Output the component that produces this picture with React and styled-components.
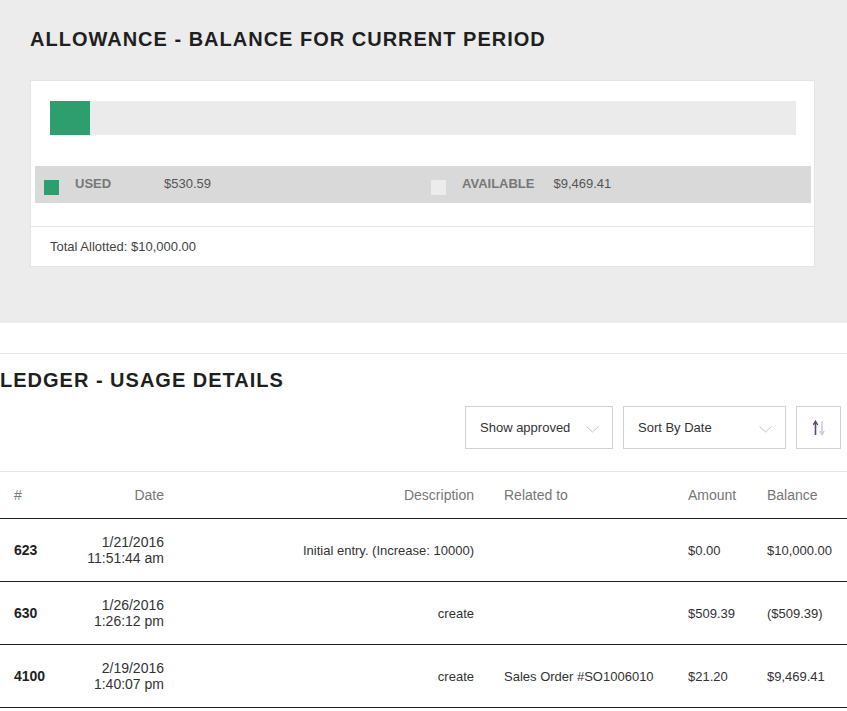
import React from "react";
import styled, { createGlobalStyle } from "styled-components";

const GlobalStyle = createGlobalStyle`
  html, body { margin: 0; padding: 0; background: #ffffff; }
  body { font-family: "Liberation Sans", Arial, sans-serif; color: #333; }
  * { box-sizing: border-box; }
`;

const AllowanceSection = styled.section`
  background: #ececec;
  padding: 27px 32px 56px 30px;
`;

const SectionTitle = styled.h2`
  margin: 0;
  font-size: 20px;
  line-height: 24px;
  font-weight: 700;
  letter-spacing: 1px;
  color: #1f1f1f;
  text-transform: uppercase;
`;

const Card = styled.div`
  margin-top: 29px;
  background: #fff;
  border: 1px solid #e3e3e3;
`;

const CardBody = styled.div`
  padding: 20px 3px 23px 4px;
`;

const Progress = styled.div`
  margin: 0 15px;
  height: 34px;
  background: #ebebeb;
  display: flex;
`;

const ProgressFill = styled.div`
  height: 100%;
  background: #2e9e6e;
`;

const Legend = styled.div`
  margin-top: 31px;
  height: 37px;
  background: #d9d9d9;
  display: grid;
  grid-template-columns: 1fr 1fr;
`;

const LegendItem = styled.div`
  display: flex;
  align-items: center;
  padding-left: ${(p) => p.$pad}px;
`;

const Swatch = styled.span`
  width: 15px;
  height: 15px;
  margin-top: 6px;
  margin-right: 16px;
  background: ${(p) => p.$color};
  flex: none;
`;

const LegendLabel = styled.span`
  min-width: 70px;
  margin-right: 19px;
  margin-top: -2px;
  font-size: 13px;
  font-weight: 700;
  color: #777;
`;

const LegendValue = styled.span`
  margin-top: -2px;
  font-size: 13px;
  color: #555;
`;

const CardFooter = styled.div`
  border-top: 1px solid #e6e6e6;
  height: 40px;
  display: flex;
  align-items: center;
  padding-left: 19px;
  font-size: 13px;
  color: #444;
`;

const LedgerSection = styled.section`
  margin-top: 30px;
  border-top: 1px solid #e6e6e6;
  padding-top: 14px;
`;

const Toolbar = styled.div`
  margin-top: 14px;
  display: flex;
  justify-content: flex-end;
  gap: 10px;
  padding-right: 6px;
`;

const Select = styled.div`
  width: ${(p) => p.$w}px;
  height: 43px;
  border: 1px solid #d2d2d2;
  background: #fff;
  display: flex;
  align-items: center;
  justify-content: space-between;
  padding: 0 13px 0 14px;
  font-size: 13px;
  color: #333;
`;

const Chevron = styled.svg`
  margin-top: 4px;
  flex: none;
`;

const SortButton = styled.button`
  width: 45px;
  height: 43px;
  border: 1px solid #d2d2d2;
  background: #fff;
  padding: 0;
  display: flex;
  align-items: center;
  justify-content: center;
  cursor: pointer;
`;

const Table = styled.div`
  margin-top: 22px;
  width: 100%;
`;

const Cols = "60px 118px 310px 186px 79px 1fr";

const HeadRow = styled.div`
  display: grid;
  grid-template-columns: ${Cols};
  height: 48px;
  border-top: 1px solid #e6e6e6;
  border-bottom: 1px solid #222;
  align-items: center;
`;

const BodyRow = styled.div`
  display: grid;
  grid-template-columns: ${Cols};
  height: 63px;
  border-bottom: 1px solid #222;
  align-items: center;
`;

const HeadCell = styled.div`
  padding: 0 14px 0 ${(p) => p.$pl || 14}px;
  text-align: ${(p) => p.$align || "left"};
  font-size: 14px;
  color: #777;
  white-space: nowrap;
`;

const Cell = styled.div`
  padding: 0 14px 0 ${(p) => p.$pl || 14}px;
  text-align: ${(p) => p.$align || "left"};
  font-size: 13px;
  color: #333;
  white-space: nowrap;
`;

const IdCell = styled(Cell)`
  font-size: 14px;
  font-weight: 700;
  color: #222;
`;

const DateCell = styled(Cell)`
  font-size: 14px;
  line-height: 16px;
  color: #333;
`;

const rows = [
  { id: "623", date: "1/21/2016", time: "11:51:44 am", desc: "Initial entry. (Increase: 10000)", rel: "", amt: "$0.00", bal: "$10,000.00" },
  { id: "630", date: "1/26/2016", time: "1:26:12 pm", desc: "create", rel: "", amt: "$509.39", bal: "($509.39)" },
  { id: "4100", date: "2/19/2016", time: "1:40:07 pm", desc: "create", rel: "Sales Order #SO1006010", amt: "$21.20", bal: "$9,469.41" },
];

const ChevronIcon = () => (
  <Chevron width="13" height="7" viewBox="0 0 13 7">
    <polyline points="0.5,0.5 6.5,6 12.5,0.5" fill="none" stroke="#c4c4c4" strokeWidth="1" />
  </Chevron>
);

const SortIcon = () => (
  <svg width="12" height="16" viewBox="0 0 12 16">
    <line x1="2.5" y1="2" x2="2.5" y2="15" stroke="#5d4470" strokeWidth="1.6" />
    <polyline points="0.3,5 2.5,1.2 4.7,5" fill="none" stroke="#5d4470" strokeWidth="1.4" />
    <line x1="9" y1="1" x2="9" y2="14" stroke="#c6cde0" strokeWidth="1.6" />
    <polyline points="6.8,11 9,14.8 11.2,11" fill="none" stroke="#c6cde0" strokeWidth="1.4" />
  </svg>
);

export default function App() {
  const used = 530.59;
  const total = 10000;
  return (
    <>
      <GlobalStyle />
      <AllowanceSection>
        <SectionTitle>Allowance - Balance for current period</SectionTitle>
        <Card>
          <CardBody>
            <Progress>
              <ProgressFill style={{ width: `${(used / total) * 100}%` }} />
            </Progress>
            <Legend>
              <LegendItem $pad={9}>
                <Swatch $color="#2e9e6e" />
                <LegendLabel>USED</LegendLabel>
                <LegendValue>$530.59</LegendValue>
              </LegendItem>
              <LegendItem $pad={8}>
                <Swatch $color="#ececec" />
                <LegendLabel>AVAILABLE</LegendLabel>
                <LegendValue>$9,469.41</LegendValue>
              </LegendItem>
            </Legend>
          </CardBody>
          <CardFooter>Total Allotted: $10,000.00</CardFooter>
        </Card>
      </AllowanceSection>

      <LedgerSection>
        <SectionTitle>Ledger - Usage details</SectionTitle>
        <Toolbar>
          <Select $w={148}>
            <span>Show approved</span>
            <ChevronIcon />
          </Select>
          <Select $w={163}>
            <span>Sort By Date</span>
            <ChevronIcon />
          </Select>
          <SortButton aria-label="Toggle sort order">
            <SortIcon />
          </SortButton>
        </Toolbar>
        <Table>
          <HeadRow>
            <HeadCell>#</HeadCell>
            <HeadCell $align="right">Date</HeadCell>
            <HeadCell $align="right">Description</HeadCell>
            <HeadCell $pl={16}>Related to</HeadCell>
            <HeadCell>Amount</HeadCell>
            <HeadCell>Balance</HeadCell>
          </HeadRow>
          {rows.map((r) => (
            <BodyRow key={r.id}>
              <IdCell>{r.id}</IdCell>
              <DateCell $align="right">
                {r.date}
                <br />
                {r.time}
              </DateCell>
              <Cell $align="right">{r.desc}</Cell>
              <Cell $pl={16}>{r.rel}</Cell>
              <Cell>{r.amt}</Cell>
              <Cell>{r.bal}</Cell>
            </BodyRow>
          ))}
        </Table>
      </LedgerSection>
    </>
  );
}
